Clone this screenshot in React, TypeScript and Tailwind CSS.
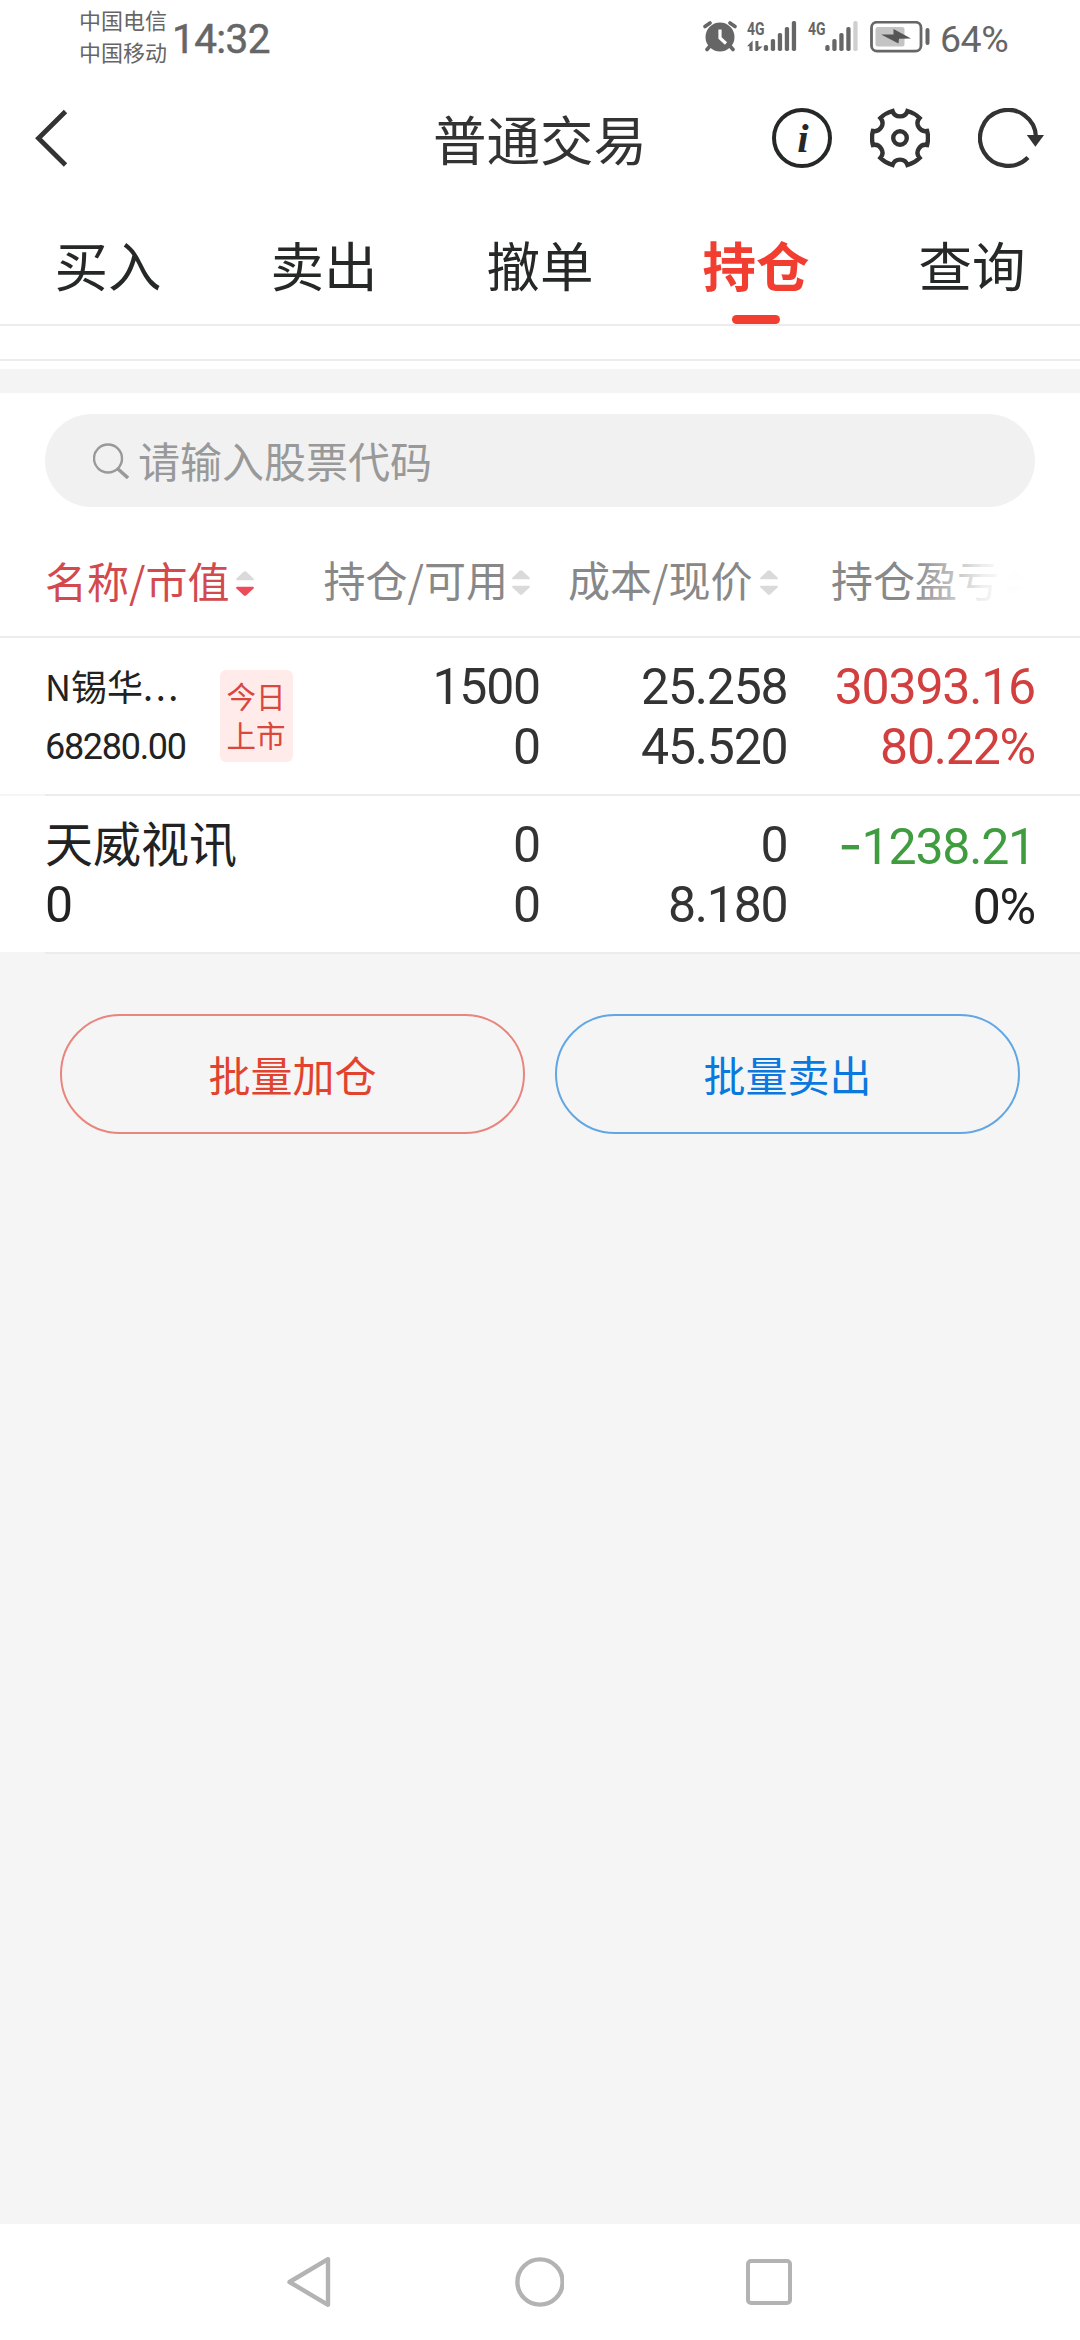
import clsx from "clsx";

const tabs = ["买入", "卖出", "撤单", "持仓", "查询"];

const columns = [
  { label: "名称/市值", className: "gap-[7px] pt-[17px] text-[#d24a4e]" },
  { label: "持仓/可用", className: "justify-end gap-[4px] pt-[15px] pr-[10px]" },
  { label: "成本/现价", className: "justify-end gap-[7px] pt-[15px] pr-[10px]" },
];

const holdings = [
  {
    name: "N锡华",
    value: "68280.00",
    badge: ["今日", "上市"],
    amount: ["1500", "0"],
    price: ["25.258", "45.520"],
    profit: ["30393.16", "80.22%"],
    profitClass: ["text-[#d23f3f]", "text-[#d23f3f]"],
  },
  {
    name: "天威视讯",
    value: "0",
    badge: null,
    amount: ["0", "0"],
    price: ["0", "8.180"],
    profit: ["-1238.21", "0%"],
    profitClass: ["text-[#3f9c3f]", "text-[#222222]"],
  },
];

function Signal({ weak = false, data = false }) {
  return (
    <svg className="overflow-visible" width="50" height="31" viewBox="0 0 50 31" fill="#666666">
      <text x="0" y="14" fontSize="19" fontWeight="700" textLength="17.5" lengthAdjust="spacingAndGlyphs" className="font-['Roboto',sans-serif]">
        4G
      </text>
      {data && <path d="M5.6 30V19.5L0 25.2H2.4V30ZM8.4 20V30H10.6L15.6 25.4H11.4V20Z" />}
      <g transform={data ? "translate(16.8 0)" : "translate(17.3 0)"}>
        <rect x="0" y="24" width="4.3" height="6" rx="1.8" />
        <rect x="7" y="18" width="4.3" height="12" rx="1.8" />
        <rect x="14" y="12" width="4.3" height="18" rx="1.8" />
        <rect x="21" y="6" width="4.3" height="24" rx="1.8" />
        <rect x="28" y="0" width="4.3" height="30" rx="1.8" fill={weak ? "#cfcfcf" : "#666666"} />
      </g>
    </svg>
  );
}

function StatusBar() {
  return (
    <div className="flex h-[72px] items-start pr-[71px] pl-[79px] text-[#666666]">
      <div className="pt-[4px] text-[22px] leading-[31.5px]">
        <p>中国电信</p>
        <p>中国移动</p>
      </div>
      <span className="ml-[5px] pt-[9px] font-['Roboto',sans-serif] text-[40.5px] leading-[60px] tracking-[-0.6px] [-webkit-text-stroke:0.5px_#666666]">
        14:32
      </span>
      <div className="ml-auto flex pt-[21px]">
        <svg width="34" height="31" viewBox="0 0 34 31" fill="#666666">
          <circle cx="17" cy="16" r="14.5" />
          <path d="M2 5.5 7 2M32 5.5 27 2M7 25 4 28.5M27 25 30 28.5" stroke="#666666" strokeWidth="3.6" strokeLinecap="round" />
          <path d="M17 8.5V17L23 22.5" fill="none" stroke="#ffffff" strokeWidth="3.2" />
        </svg>
        <div className="ml-[10.5px] flex gap-[11px]">
          <Signal data />
          <Signal weak />
        </div>
        <svg className="ml-[12px]" width="60" height="32" viewBox="0 0 60 32">
          <rect x="1.5" y="1.2" width="49.5" height="29" rx="5.5" fill="none" stroke="#666666" strokeWidth="2.8" />
          <rect x="5.5" y="6" width="29" height="19.5" rx="2.5" fill="#c4c4c4" />
          <path d="M11 13.5 23.5 13.5V8L41 17.5 29 17.8 28.5 22.5Z" fill="#555555" />
          <rect x="55.5" y="7" width="4" height="17" rx="2" fill="#666666" />
        </svg>
      </div>
      <span className="ml-[10px] w-[69px] pt-[9px] font-['Roboto',sans-serif] text-[37.5px] leading-[60px] tracking-[-0.5px] whitespace-nowrap">
        64%
      </span>
    </div>
  );
}

function Header() {
  return (
    <header className="grid h-[132px] grid-cols-3 items-center text-[#333333]">
      <svg className="ml-[34px]" width="36" height="60" viewBox="0 0 36 60" fill="none" stroke="#333333" strokeWidth="4.8">
        <path d="M31.5 3.5 4.5 30.2 31.5 57" />
      </svg>
      <h1 className="pb-px text-center text-[53.5px] leading-[60px]">普通交易</h1>
      <div className="flex items-center justify-end pr-[36px]">
        <div className="flex size-[60px] items-center justify-center rounded-full border-[4.5px] border-[#262828] pl-[2px] font-['Liberation_Serif',serif] text-[41px] leading-none font-bold text-[#262828] italic">
          i
        </div>
        <svg className="ml-[38px]" width="60" height="60" viewBox="-30 -30 60 60" fill="none" stroke="#333333" strokeWidth="4.4">
          <path d="M27.1-7A28 28 0 0 1 27.1 7A7.9 7.9 0 0 0 19.6 20A28 28 0 0 1 7.5 27A7.9 7.9 0 0 0-7.5 27A28 28 0 0 1-19.6 20A7.9 7.9 0 0 0-27.1 7A28 28 0 0 1-27.1-7A7.9 7.9 0 0 0-19.6-20A28 28 0 0 1-7.5-27A7.9 7.9 0 0 0 7.5-27A28 28 0 0 1 19.6-20A7.9 7.9 0 0 0 27.1-7Z" />
          <circle r="6.8" />
        </svg>
        <svg className="ml-[48px]" width="66" height="60" viewBox="0 0 66 60">
          <path d="M58 29A28 28 0 1 0 50 49.5" fill="none" stroke="#333333" strokeWidth="4.2" />
          <path d="M48.8 27H66L57.4 38.8Z" fill="#333333" />
        </svg>
      </div>
    </header>
  );
}

function Tabs() {
  return (
    <nav className="grid h-[122px] grid-cols-5 border-b-2 border-[#ececec]">
      {tabs.map((tab) => (
        <div key={tab} className="flex flex-col items-center justify-between pt-[30px]">
          <span
            className={clsx(
              "text-[53.5px] leading-[60px]",
              tab === "持仓" ? "font-bold text-[#f23e31]" : "text-[#262828]",
            )}
          >
            {tab}
          </span>
          {tab === "持仓" && <div className="h-[9px] w-[48px] rounded-full bg-[#f23e31]" />}
        </div>
      ))}
    </nav>
  );
}

function SortIcon({ active = false }) {
  return (
    <svg width="18" height="25" viewBox="0 0 18 25" fill="#dadada">
      <path d="M7.6.7Q9-.4 10.4.7L17.5 7.6Q18.4 9.3 17 9.3H1Q-.4 9.3.5 7.6Z" />
      <path d="M7.6 24.3Q9 25.4 10.4 24.3L17.5 17.4Q18.4 15.7 17 15.7H1Q-.4 15.7.5 17.4Z" fill={active ? "#ee4b58" : "#dadada"} />
    </svg>
  );
}

function TableHead() {
  return (
    <div className="relative grid h-[131px] grid-cols-4 border-b-2 border-[#ececec] px-[45px] text-[42px] leading-[60px] text-[#888888]">
      {columns.map((col, i) => (
        <div key={col.label} className={clsx("flex items-center whitespace-nowrap", col.className)}>
          <span>{col.label}</span>
          <div className="pt-[7px]">
            <SortIcon active={i === 0} />
          </div>
        </div>
      ))}
      <div className="flex items-center justify-end gap-[6px] pt-[15px] pr-[12px] whitespace-nowrap">
        <span>持仓盈亏</span>
        <div className="pt-[7px]">
          <SortIcon />
        </div>
      </div>
      <div className="absolute top-0 right-[45px] h-[120px] w-[125px] bg-[linear-gradient(95deg,rgba(255,255,255,0)_6%,rgba(255,255,255,0.5)_38%,rgba(255,255,255,0.86)_58%,rgba(255,255,255,0.97)_75%)]" />
    </div>
  );
}

function Num({ text, className }: { text: string; className?: string }) {
  const negative = text.startsWith("-");
  return (
    <p className={className}>
      {negative && <span className="font-['Inter',sans-serif] text-[54px]">-</span>}
      {negative ? text.slice(1) : text}
    </p>
  );
}

function NumCell({ values, colors = [] }: { values: string[]; colors?: string[] }) {
  return (
    <div className="pt-[4px] text-right font-['Roboto',sans-serif] text-[50px] tracking-[-1.2px] whitespace-nowrap">
      <Num text={values[0]} className={colors[0]} />
      <Num text={values[1]} className={colors[1]} />
    </div>
  );
}

function HoldingRow({ item }: { item: (typeof holdings)[number] }) {
  return (
    <div className="flex flex-col bg-white">
      <div className="grid h-[156px] grid-cols-4 px-[45px] pt-[15px] text-[48px] leading-[60px] text-[#333333]">
        {item.badge ? (
          <div className="flex justify-between text-[#222222]">
            <div className="text-[36px] whitespace-nowrap">
              <p className="pt-[2px]">
                {item.name}
                <span className="tracking-[2.6px]">...</span>
              </p>
              <p className="pt-[2px] font-['Roboto',sans-serif] text-[36px] tracking-[-1.3px]">{item.value}</p>
            </div>
            <div className="mt-[17px] h-[92px] w-[73px] shrink-0 rounded-[6px] bg-[#ffecea] pt-[6px] text-center text-[29.5px] leading-[39px] text-[#d9473d]">
              <p>{item.badge[0]}</p>
              <p>{item.badge[1]}</p>
            </div>
          </div>
        ) : (
          <div className="text-[#222222]">
            <p>{item.name}</p>
            <p className="pt-[4px] font-['Roboto',sans-serif] text-[50px]">{item.value}</p>
          </div>
        )}
        <NumCell values={item.amount} />
        <NumCell values={item.price} />
        <NumCell values={item.profit} colors={item.profitClass} />
      </div>
      <div className="flex h-[2px] bg-[#f5f5f5] pl-[45px]">
        <div className="flex-1 bg-[#ececec]" />
      </div>
    </div>
  );
}

function NavBar() {
  return (
    <div className="flex h-[116px] items-center justify-between bg-white pr-[288px] pl-[286px]">
      <svg width="46" height="52" viewBox="0 0 46 52" fill="none" stroke="#b3b3b3" strokeWidth="4.4" strokeLinejoin="round">
        <path d="M42 3.2V48.8L3.5 26Z" />
      </svg>
      <svg width="50" height="50" viewBox="0 0 50 50" fill="none" stroke="#b3b3b3" strokeWidth="4.4">
        <circle cx="26" cy="25" r="22.6" />
      </svg>
      <div className="size-[46px] rounded-[5px] border-[4.4px] border-[#b3b3b3]" />
    </div>
  );
}

export default function App() {
  return (
    <div className="flex h-[2340px] w-[1080px] flex-col overflow-hidden bg-[#f5f5f5] font-['Noto_Sans_CJK_SC',sans-serif]">
      <div className="bg-white">
        <StatusBar />
        <Header />
        <Tabs />
        <div className="h-[35px] border-b-2 border-[#ececec]" />
        <div className="h-[8px]" />
      </div>
      <div className="h-[24px] bg-[#f4f4f4]" />
      <main className="bg-white pt-[21px]">
        <div className="mx-[45px] flex h-[93px] items-center rounded-full bg-[#f1f1f1] pl-[48px] text-[42px] text-[#999999]">
          <svg width="36" height="36" viewBox="0 0 36 36" fill="none" stroke="#999999">
            <circle cx="15" cy="15.5" r="14" strokeWidth="2.4" />
            <path d="M25 26 35 35" strokeWidth="3.4" />
          </svg>
          <span className="ml-[9px] pb-[2px] leading-[60px]">请输入股票代码</span>
        </div>
        <TableHead />
        {holdings.map((item) => (
          <HoldingRow key={item.name} item={item} />
        ))}
      </main>
      <div className="grid grid-cols-2 gap-[30px] px-[60px] pt-[60px] text-[42px]">
        <button className="h-[120px] rounded-full border-2 border-[#e8857d] pb-[2px] text-[#e2432f]">批量加仓</button>
        <button className="h-[120px] rounded-full border-2 border-[#62a7e4] pb-[2px] text-[#0b78de]">批量卖出</button>
      </div>
      <div className="flex-1" />
      <NavBar />
    </div>
  );
}
